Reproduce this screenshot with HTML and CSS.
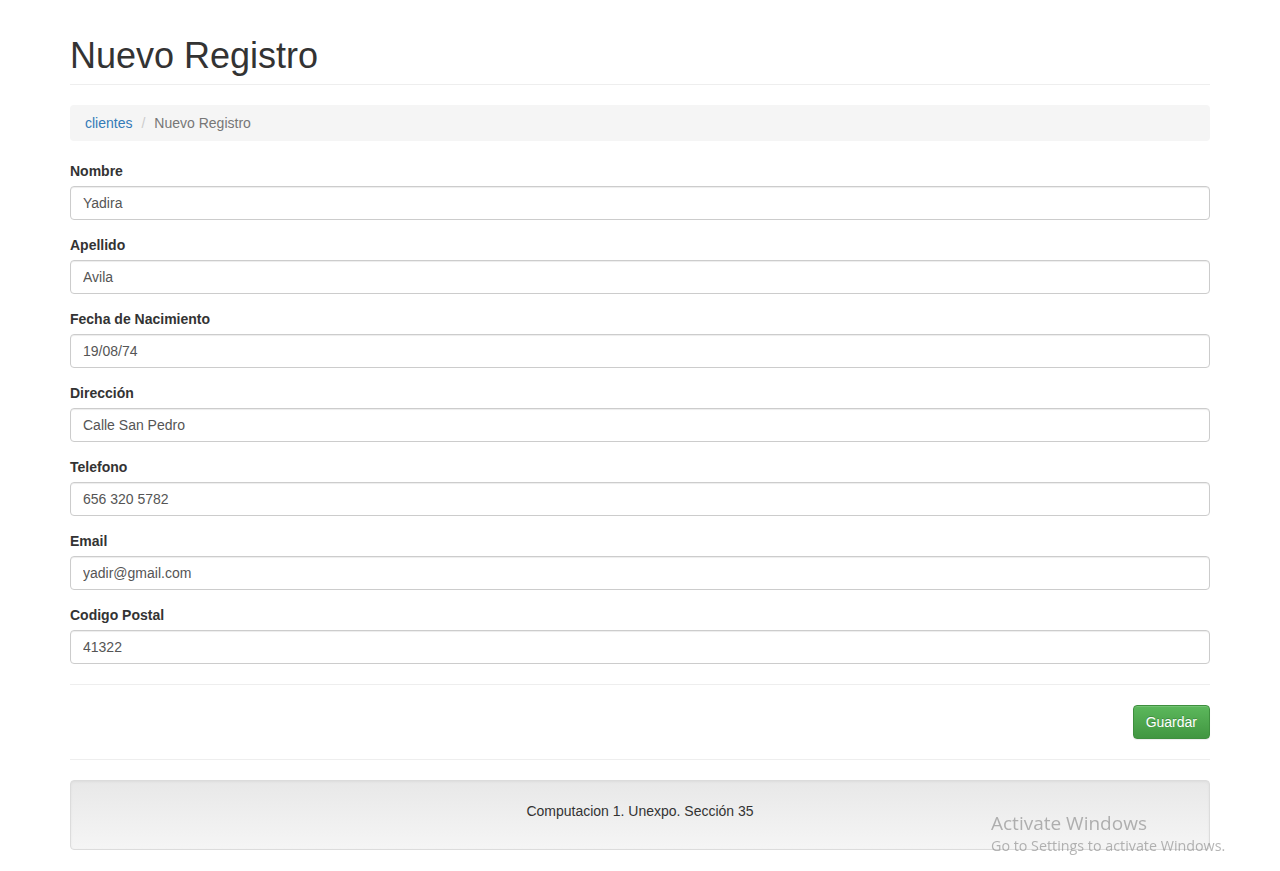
FILE: index.html
```html
<!DOCTYPE html>
<html lang="es">
<head>
<meta charset="utf-8">
<title>Nuevo Registro</title>
<link rel="stylesheet" href="styles.css">
</head>
<body>
<div class="container">
  <div class="page-header">
    <h1>Nuevo Registro</h1>
  </div>
  <ol class="breadcrumb">
    <li><a href="#">clientes</a></li>
    <li class="sep">/</li>
    <li class="active">Nuevo Registro</li>
  </ol>
  <form class="form">
    <div class="form-group">
      <label>Nombre</label>
      <input class="form-control" type="text" value="Yadira">
    </div>
    <div class="form-group">
      <label>Apellido</label>
      <input class="form-control" type="text" value="Avila">
    </div>
    <div class="form-group">
      <label>Fecha de Nacimiento</label>
      <input class="form-control" type="text" value="19/08/74">
    </div>
    <div class="form-group">
      <label>Dirección</label>
      <input class="form-control" type="text" value="Calle San Pedro">
    </div>
    <div class="form-group">
      <label>Telefono</label>
      <input class="form-control" type="text" value="656 320 5782">
    </div>
    <div class="form-group">
      <label>Email</label>
      <input class="form-control" type="text" value="yadir@gmail.com">
    </div>
    <div class="form-group">
      <label>Codigo Postal</label>
      <input class="form-control" type="text" value="41322">
    </div>
    <hr class="rule">
    <div class="actions">
      <button type="button" class="btn-success">Guardar</button>
    </div>
    <hr class="rule">
  </form>
  <div class="well">Computacion 1. Unexpo. Sección 35</div>
</div>
<div class="activate">
  <div class="act-title">Activate Windows</div>
  <div class="act-sub">Go to Settings to activate Windows.</div>
</div>
</body>
</html>
```
FILE: styles.css
```css
* { box-sizing: border-box; }
html, body { margin: 0; padding: 0; }
body {
  font-family: "Liberation Sans", Arial, Helvetica, sans-serif;
  font-size: 14px;
  line-height: 20px;
  color: #333;
  background: #fff;
}
.container {
  width: 1170px;
  padding: 0 15px;
  margin: 0 auto;
}
.page-header {
  padding-top: 36px;
  padding-bottom: 8px;
  border-bottom: 1px solid #eee;
  margin-bottom: 20px;
}
.page-header h1 {
  margin: 0;
  font-size: 36px;
  line-height: 39.6px;
  font-weight: 500;
  color: #333;
}
.breadcrumb {
  list-style: none;
  margin: 0 0 20px;
  padding: 8px 15px;
  height: 36px;
  background: #f5f5f5;
  border-radius: 4px;
  display: flex;
  gap: 9px;
}
.breadcrumb a { color: #337ab7; text-decoration: none; }
.breadcrumb .sep { color: #ccc; }
.breadcrumb .active { color: #777; }
.form { margin: 0; }
.form-group { margin-bottom: 15px; }
.form-group label {
  display: block;
  font-weight: bold;
  margin-bottom: 5px;
}
.form-control {
  display: block;
  width: 100%;
  height: 34px;
  padding: 6px 12px;
  font-family: inherit;
  font-size: 14px;
  line-height: 20px;
  color: #555;
  background: #fff;
  border: 1px solid #ccc;
  border-radius: 4px;
  box-shadow: inset 0 1px 1px rgba(0,0,0,0.075);
  margin: 0;
}
.rule {
  border: 0;
  border-top: 1px solid #eee;
  margin: 20px 0;
  height: 0;
}
.actions {
  display: flex;
  justify-content: flex-end;
}
.btn-success {
  height: 34px;
  padding: 6px 12px;
  font-family: inherit;
  font-size: 14px;
  line-height: 20px;
  color: #fff;
  background-image: linear-gradient(to bottom, #5cb85c 0%, #419641 100%);
  border: 1px solid #3e8f3e;
  border-radius: 4px;
  text-shadow: 0 -1px 0 rgba(0,0,0,0.2);
  box-shadow: inset 0 1px 0 rgba(255,255,255,0.15), 0 1px 1px rgba(0,0,0,0.075);
  cursor: pointer;
}
.well {
  margin-top: 0;
  height: 70px;
  padding: 20px 19px;
  text-align: center;
  background-image: linear-gradient(to bottom, #e8e8e8 0%, #f5f5f5 100%);
  border: 1px solid #dcdcdc;
  border-radius: 4px;
  box-shadow: inset 0 1px 3px rgba(0,0,0,0.05), 0 1px 0 rgba(255,255,255,0.1);
}
.activate {
  position: fixed;
  left: 991px;
  top: 810px;
  color: rgba(120,120,120,0.55);
  font-family: "Open Sans", "DejaVu Sans", sans-serif;
  pointer-events: none;
}
.act-title { font-size: 19px; line-height: 26px; }
.act-sub { font-size: 14.3px; line-height: 20px; }
```
